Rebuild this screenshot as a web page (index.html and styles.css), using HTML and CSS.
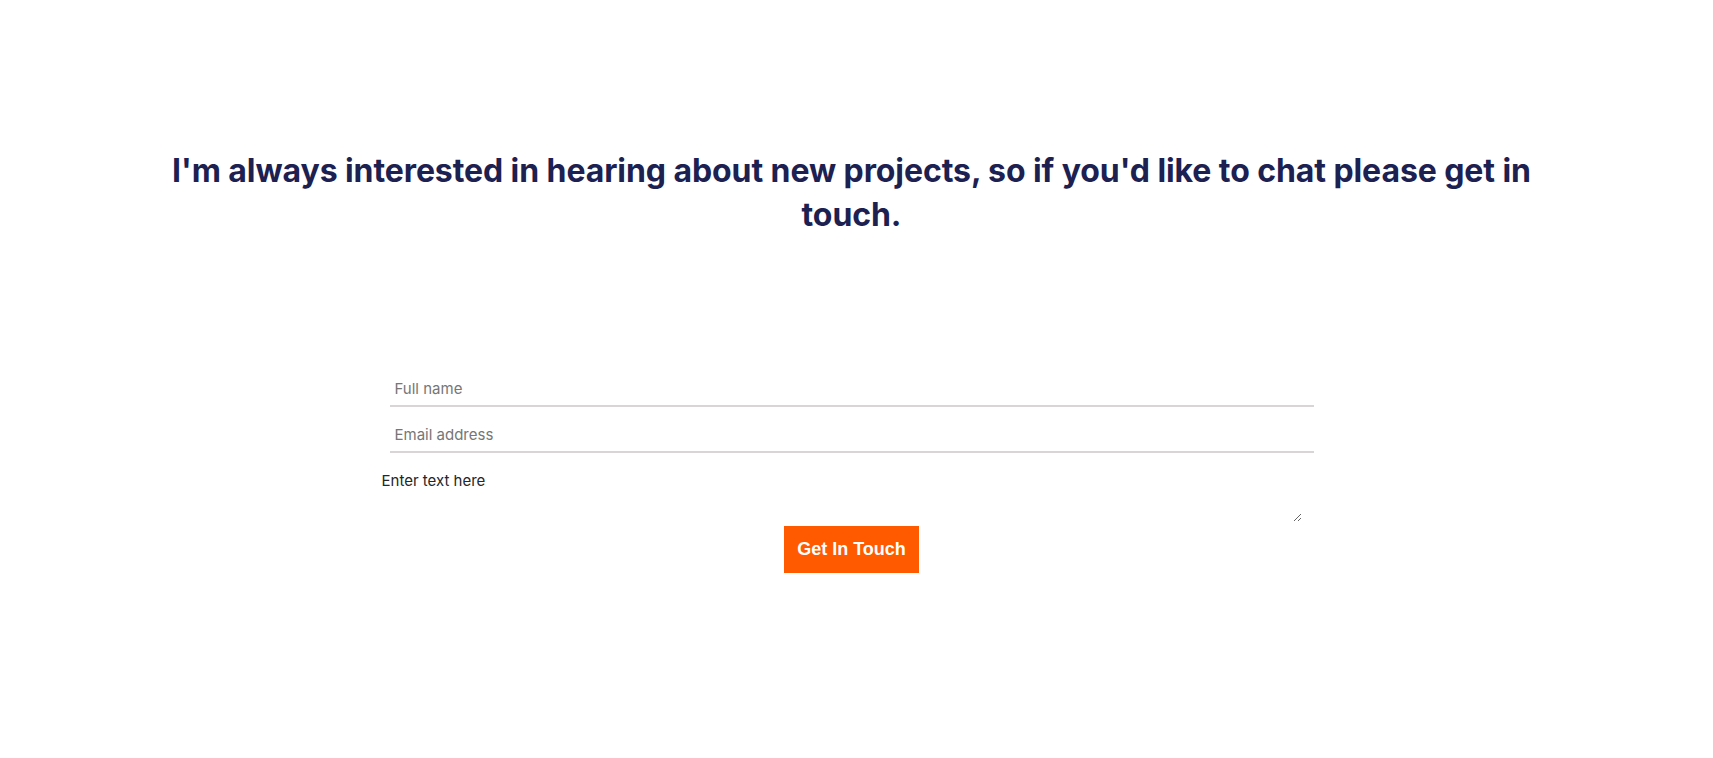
FILE: index.html
```html
<!DOCTYPE html>
<html lang="en">
<head>
<meta charset="utf-8">
<title>Contact</title>
<link rel="stylesheet" href="styles.css">
</head>
<body>
<main class="page">
  <section class="intro">
    <h2 class="intro-title">I'm always interested in hearing about new projects, so if you'd like to chat please get in touch.</h2>
  </section>
  <form class="contact-form">
    <input class="field" type="text" placeholder="Full name">
    <input class="field" type="email" placeholder="Email address">
    <textarea class="message">Enter text here</textarea>
    <div class="actions">
      <button class="submit" type="button">Get In Touch</button>
    </div>
  </form>
</main>
</body>
</html>
```

FILE: styles.css
```css
* {
  box-sizing: border-box;
}

html, body {
  margin: 0;
  padding: 0;
  background: #ffffff;
}

body {
  font-family: Inter, "Noto Sans", sans-serif;
  width: 1713px;
  height: 758px;
  overflow: hidden;
}

.page {
  width: calc(100% - 10px);
  display: flex;
  flex-direction: column;
  align-items: center;
  padding-top: 149px;
}

.intro {
  width: 1400px;
}

.intro-title {
  margin: 0;
  text-align: center;
  font-size: 32px;
  line-height: 44px;
  letter-spacing: -0.08px;
  font-weight: 700;
  color: #1c2151;
}

.contact-form {
  width: 944px;
  margin-top: 134px;
  display: flex;
  flex-direction: column;
}

.field {
  display: block;
  margin: 0 10px 10px;
  height: 36px;
  padding: 0 5px;
  border: none;
  border-bottom: 2px solid #d9d5d6;
  font-family: Inter, "Noto Sans", sans-serif;
  font-size: 15px;
  color: #222222;
  outline: none;
  background: transparent;
}

.field::placeholder {
  color: #767676;
}

.message {
  display: block;
  width: 922px;
  height: 52px;
  margin-top: 7px;
  padding: 2px;
  border: none;
  outline: none;
  font-family: Inter, "Noto Sans", sans-serif;
  font-size: 15px;
  line-height: 18px;
  color: #262626;
  resize: vertical;
}

.actions {
  display: flex;
  justify-content: center;
  margin-top: 4px;
}

.submit {
  width: 135px;
  height: 47px;
  padding: 0;
  border: none;
  background: #ff5a00;
  color: #ffffff;
  font-family: "Liberation Sans", Arial, sans-serif;
  font-weight: 700;
  font-size: 18px;
  cursor: pointer;
}
```
